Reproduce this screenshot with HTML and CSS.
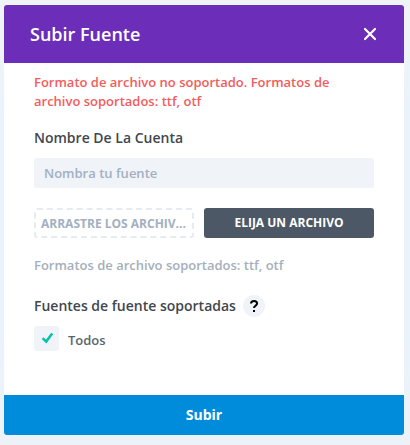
FILE: index.html
```html
<!DOCTYPE html>
<html lang="es">
<head>
<meta charset="UTF-8">
<meta name="viewport" content="width=device-width, initial-scale=1.0">
<title>Subir Fuente</title>
<link rel="stylesheet" href="styles.css">
</head>
<body>
  <div class="modal">
    <header class="modal-header">
      <h3>Subir Fuente</h3>
      <button class="close" type="button" aria-label="Cerrar">
        <svg width="14" height="14" viewBox="0 0 14 14"><path d="M2 2L12 12M12 2L2 12"/></svg>
      </button>
    </header>

    <div class="modal-body">
      <p class="error">Formato de archivo no soportado. Formatos de archivo soportados: ttf, otf</p>

      <label class="label" for="font-name">Nombre De La Cuenta</label>
      <input class="text-input" id="font-name" type="text" placeholder="Nombra tu fuente">

      <div class="upload">
        <div class="drop-zone"><span>Arrastre los archiv...</span></div>
        <button class="choose" type="button">Elija un archivo</button>
      </div>
      <p class="hint">Formatos de archivo soportados: ttf, otf</p>

      <div class="label-row">
        <span class="label">Fuentes de fuente soportadas</span>
        <span class="help">
          <svg width="22" height="22" viewBox="0 0 22 22"><path d="M8 8.6C8 6.8 9.2 6 11 6s3.1.9 3.1 2.6c0 2-3.1 2.1-3.1 4.4"/><rect x="10" y="15" width="2" height="2"/></svg>
        </span>
      </div>

      <div class="option">
        <span class="checkbox">
          <svg width="25" height="25" viewBox="0 0 25 25"><path d="M8.6 12.2L12.2 15.6L18.2 7.6"/></svg>
        </span>
        <span class="option-text">Todos</span>
      </div>
    </div>

    <button class="submit" type="button">Subir</button>
  </div>
</body>
</html>
```
FILE: styles.css
```css
:root {
  --purple: #6c2eb9;
  --blue: #008bdb;
  --error: #f45c5c;
  --dark: #4c5866;
  --text: #42474d;
  --muted: #a2b0c1;
  --field: #f0f3f8;
}

* {
  margin: 0;
  padding: 0;
  box-sizing: border-box;
}

body {
  height: 445px;
  padding: 5px 6px 10px 4px;
  font-family: 'Open Sans', sans-serif;
  font-size: 13px;
  font-weight: 600;
  color: var(--text);
  background: linear-gradient(#f1f4f6, #e9f3fc 25%, #e9f3fc 75%, #edf2f8);
  overflow: hidden;
}

button {
  border: none;
  font-family: inherit;
}

svg {
  display: block;
}

.modal {
  display: flex;
  flex-direction: column;
  height: 430px;
  border-radius: 3px;
  background: #fff;
  overflow: hidden;
}

.modal-header {
  display: flex;
  justify-content: space-between;
  align-items: center;
  height: 58px;
  padding: 0 27px 0 26px;
  background: var(--purple);
}

.modal-header h3 {
  font-size: 18px;
  font-weight: 600;
  line-height: 24px;
  color: #fff;
}

.close {
  background: none;
}

.close path {
  fill: none;
  stroke: #fff;
  stroke-width: 2.2;
  stroke-linecap: round;
}

.modal-body {
  flex: 1;
  padding: 10px 30px 0;
}

.error {
  margin-bottom: 17px;
  line-height: 19px;
  color: var(--error);
}

.label {
  display: block;
  font-size: 14px;
  line-height: 20px;
}

.text-input {
  display: block;
  width: 100%;
  height: 30px;
  margin-top: 10px;
  padding: 0 10px;
  border: none;
  border-radius: 3px;
  font-family: inherit;
  font-size: 13px;
  font-weight: 600;
  background: var(--field);
}

.text-input::placeholder {
  color: var(--muted);
}

.upload {
  display: flex;
  gap: 10px;
  margin-top: 20px;
}

.drop-zone {
  width: 160px;
  height: 30px;
  padding: 0 5px;
  border: 2px dashed #e6ebf2;
  border-radius: 3px;
  font-size: 12px;
  font-weight: 700;
  line-height: 27px;
  text-transform: uppercase;
  color: var(--muted);
}

.drop-zone span {
  white-space: nowrap;
}

.choose {
  flex: 1;
  height: 30px;
  padding-bottom: 1px;
  border-radius: 3px;
  font-size: 12px;
  font-weight: 700;
  text-transform: uppercase;
  color: #fff;
  background: var(--dark);
}

.hint {
  margin-top: 17px;
  line-height: 20px;
  color: #a5afba;
}

.label-row {
  display: flex;
  align-items: center;
  gap: 7px;
  margin-top: 20px;
}

.help {
  border-radius: 50%;
  background: var(--field);
}

.help path {
  fill: none;
  stroke: #000;
  stroke-width: 2;
}

.option {
  display: flex;
  align-items: center;
  gap: 9px;
  margin-top: 9px;
}

.checkbox {
  border-radius: 3px;
  background: var(--field);
}

.checkbox path {
  fill: none;
  stroke: #00c3aa;
  stroke-width: 2.5;
}

.option-text {
  padding-top: 3px;
  line-height: 20px;
  color: #5a6573;
}

.submit {
  height: 40px;
  padding-bottom: 1px;
  font-size: 14px;
  font-weight: 700;
  color: #fff;
  background: var(--blue);
}
```
